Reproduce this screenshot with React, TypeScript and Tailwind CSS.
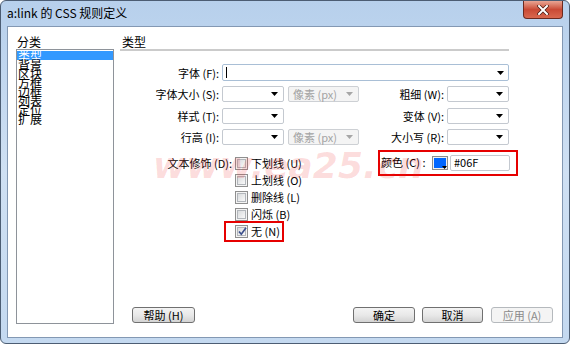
import clsx from "clsx";

const font = "font-['Noto_Sans_CJK_SC','Liberation_Sans',sans-serif]";

function Arrow({ disabled }: { disabled?: boolean }) {
  return (
    <svg width="7" height="4" viewBox="0 0 7 4">
      <path d="M0 0h7L3.5 4z" fill={disabled ? "#a6a6a6" : "#000"} />
    </svg>
  );
}

function Select({
  w,
  text,
  disabled,
}: {
  w: string;
  text?: string;
  disabled?: boolean;
}) {
  return (
    <div
      className={clsx(
        "flex h-[16px] shrink-0 items-center justify-between rounded-[2px] border pl-[4px] pr-[5px] text-[11px]",
        w,
        disabled
          ? "border-[#cdd0d4] bg-[#f4f4f4] text-[#a3a3a3]"
          : "border-[#c4c9d0] bg-white text-black",
      )}
    >
      <span>{text}</span>
      <Arrow disabled={disabled} />
    </div>
  );
}

function Checkbox({ checked }: { checked?: boolean }) {
  return (
    <div className="flex h-[13px] w-[13px] shrink-0 items-center justify-center border border-[#8f8f8f] bg-[#f4f4f4]">
      <div className="relative h-[9px] w-[9px] border border-[#b2b6bb] bg-gradient-to-br from-[#d9dbdd] to-[#f9f9f9]">
        {checked && (
          <svg
            className="absolute left-[-1px] top-[-2px]"
            width="11"
            height="11"
            viewBox="0 0 11 11"
          >
            <path
              d="M2 5.5 L4.3 8.2 L9 1.8"
              fill="none"
              stroke="#3b4f8c"
              strokeWidth="1.7"
            />
          </svg>
        )}
      </div>
    </div>
  );
}

function Button({
  label,
  w,
  disabled,
}: {
  label: string;
  w: string;
  disabled?: boolean;
}) {
  return (
    <div
      className={clsx(
        "flex h-[16px] items-center justify-center rounded-[3px] border text-[11px]",
        w,
        disabled
          ? "border-[#b5b9bd] bg-[#f4f4f4] text-[#8a8a8a]"
          : "border-[#707070] bg-gradient-to-b from-[#f3f3f3] via-[#e9e9e9] to-[#d3d3d3] text-black",
      )}
    >
      {label}
    </div>
  );
}

function Label({ children, w }: { children: string; w: string }) {
  return (
    <div className={clsx("shrink-0 whitespace-nowrap pr-[3px] text-right text-[11px] leading-[16px]", w)}>
      {children}
    </div>
  );
}

const categories = ["类型", "背景", "区块", "方框", "边框", "列表", "定位", "扩展"];

const decorations = ["下划线 (U)", "上划线 (O)", "删除线 (L)", "闪烁 (B)"];

export default function App() {
  return (
    <div
      className={clsx(
        "relative h-[344px] w-[570px] overflow-hidden rounded-[6px] border border-[#4c5d73] bg-gradient-to-b from-[#b7d0ec] via-[#cfe0f3] to-[#c4d9f0] text-black",
        font,
      )}
    >
      {/* title bar */}
      <div className="flex h-[25px] items-start justify-between">
        <div className="pl-[6px] pt-[5px] text-[12px] leading-[14px]">
          a:link 的 CSS 规则定义
        </div>
        <div className="mr-[6px] flex h-[18px] w-[40px] items-center justify-center rounded-b-[4px] border border-t-0 border-[#6b2a20] bg-gradient-to-b from-[#e8a594] via-[#c94a35] to-[#d9684f]">
          <svg width="12" height="10" viewBox="0 0 12 10">
            <path
              d="M2 1 L10 9 M10 1 L2 9"
              stroke="#4a1a12"
              strokeWidth="3.4"
              strokeLinecap="square"
            />
            <path
              d="M2 1 L10 9 M10 1 L2 9"
              stroke="#fff"
              strokeWidth="2"
              strokeLinecap="square"
            />
          </svg>
        </div>
      </div>

      {/* client area */}
      <div className="relative mx-[6px] flex h-[312px] border border-[#8398b3] bg-white">
        <div className="flex w-[106px] shrink-0 flex-col pl-[8px] pt-[8px]">
          <div className="pl-[1px] text-[12px] leading-[14px]">分类</div>
          <div className="h-[275px] w-[98px] border border-[#8e939a] bg-white pt-[1px] text-[12px]">
            {categories.map((c, i) => (
              <div
                key={c}
                className={clsx(
                  "h-[9px] pl-[1px] leading-[9px]",
                  i === 0 && "bg-[#3399ff] text-white",
                )}
              >
                {c}
              </div>
            ))}
          </div>
        </div>

        <div className="flex flex-1 flex-col pl-[6px] pt-[8px]">
          <div className="w-[389px]">
            <div className="pl-[2px] text-[12px] leading-[14px]">类型</div>
            <div className="h-[2px] bg-[#cbcbcb]" />

            <div className="mt-[13px] flex flex-col gap-[5px]">
              <div className="flex items-center">
                <Label w="w-[102px]">字体 (F):</Label>
                <div className="flex h-[17px] flex-1 items-center justify-between rounded-[2px] border border-[#a9bfd6] pl-[3px] pr-[4px]">
                  <div className="h-[11px] w-[1px] bg-black" />
                  <Arrow />
                </div>
              </div>
              <div className="flex items-center">
                <Label w="w-[102px]">字体大小 (S):</Label>
                <Select w="w-[62px]" />
                <div className="w-[4px]" />
                <Select w="w-[71px]" text="像素 (px)" disabled />
                <div className="flex-1 pr-[3px] text-right text-[11px]">粗细 (W):</div>
                <Select w="w-[62px]" />
              </div>
              <div className="flex items-center">
                <Label w="w-[102px]">样式 (T):</Label>
                <Select w="w-[62px]" />
                <div className="flex-1 pr-[3px] text-right text-[11px]">变体 (V):</div>
                <Select w="w-[62px]" />
              </div>
              <div className="flex items-center">
                <Label w="w-[102px]">行高 (I):</Label>
                <Select w="w-[62px]" />
                <div className="w-[4px]" />
                <Select w="w-[71px]" text="像素 (px)" disabled />
                <div className="flex-1 pr-[3px] text-right text-[11px]">大小写 (R):</div>
                <Select w="w-[62px]" />
              </div>
            </div>

            <div className="mt-[9px] flex items-start">
              <Label w="w-[115px]">文本修饰 (D):</Label>
              <div className="flex flex-col">
                {decorations.map((d) => (
                  <div key={d} className="flex h-[17px] items-center gap-[3px] whitespace-nowrap text-[11px]">
                    <Checkbox />
                    <span>{d}</span>
                  </div>
                ))}
                <div className="-my-[2px] -ml-[11px] flex h-[21px] w-[60px] items-center gap-[3px] whitespace-nowrap border-2 border-[#e60000] pl-[9px] text-[11px]">
                  <Checkbox checked />
                  <span>无 (N)</span>
                </div>
              </div>
              <div className="-mr-[9px] -mt-[5px] ml-auto flex h-[26px] w-[140px] items-center whitespace-nowrap border-2 border-[#e60000] pl-[1px] text-[11px]">
                <span className="w-[51px]">颜色 (C) :</span>
                <div className="relative h-[14px] w-[16px] border border-[#8c8c8c] bg-[#f0f0f0] p-[1px]">
                  <div className="h-full w-full bg-[#0066ff]" />
                  <svg className="absolute bottom-[0px] right-[0px]" width="5" height="3" viewBox="0 0 5 3">
                    <path d="M0 0h5L2.5 3z" fill="#000" />
                  </svg>
                </div>
                <div className="ml-[2px] flex h-[16px] w-[60px] items-center rounded-[2px] border border-[#c4c9d0] pl-[3px]">
                  #06F
                </div>
              </div>
            </div>
          </div>

          <div className="mt-auto flex items-center pb-[14px] pl-[12px] pr-[9px]">
            <Button label="帮助 (H)" w="w-[63px]" />
            <div className="flex-1" />
            <Button label="确定" w="w-[62px]" />
            <div className="w-[7px]" />
            <Button label="取消" w="w-[61px]" />
            <div className="w-[8px]" />
            <Button label="应用 (A)" w="w-[62px]" disabled />
          </div>
        </div>

        {/* watermark */}
        <div className="pointer-events-none absolute left-[145px] top-[121px] whitespace-nowrap text-[36px] font-bold italic leading-none text-[rgba(240,40,40,0.16)] font-['DejaVu_Sans',sans-serif]">
          www.ea25.cn
        </div>
      </div>
    </div>
  );
}
